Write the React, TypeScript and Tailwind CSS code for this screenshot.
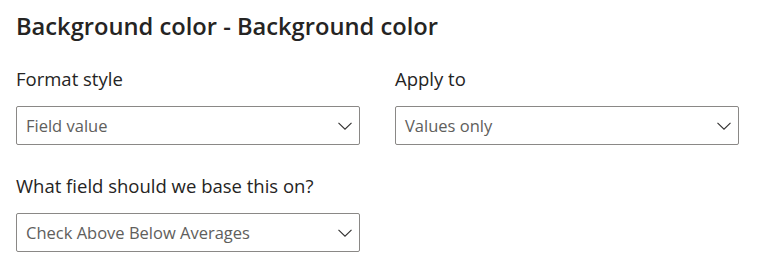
import React from "react";

const font = { fontFamily: '"Open Sans", "Noto Sans", sans-serif' };

function Chevron() {
  return (
    <svg width="14" height="8" viewBox="0 0 14 8" fill="none" className="shrink-0">
      <path d="M0.5 0.8 L7 7.2 L13.5 0.8" stroke="#323130" strokeWidth="1.1" />
    </svg>
  );
}

function Select({ value }: { value: string }) {
  return (
    <div className="flex h-[39px] w-[344px] items-center justify-between rounded-[2px] border border-[#8a8886] bg-white pl-[9px] pr-[7px]">
      <span className="text-[16.5px] leading-[22px] text-[#605e5c]">{value}</span>
      <Chevron />
    </div>
  );
}

export default function App() {
  return (
    <div className="h-[270px] w-[777px] bg-white pl-[16px] pt-[10px] text-[#252423]" style={font}>
      <h1 className="text-[23.7px] font-semibold leading-[32px]">Background color - Background color</h1>
      <div className="mt-[25px] flex gap-[35px]">
        <div className="flex flex-col gap-[15px]">
          <div className="text-[18.5px] leading-[24px]">Format style</div>
          <Select value="Field value" />
        </div>
        <div className="flex flex-col gap-[15px]">
          <div className="text-[18.5px] leading-[24px]">Apply to</div>
          <Select value="Values only" />
        </div>
      </div>
      <div className="mt-[29px] flex flex-col gap-[15px]">
        <div className="text-[18.5px] leading-[24px]">What field should we base this on?</div>
        <Select value="Check Above Below Averages" />
      </div>
    </div>
  );
}
